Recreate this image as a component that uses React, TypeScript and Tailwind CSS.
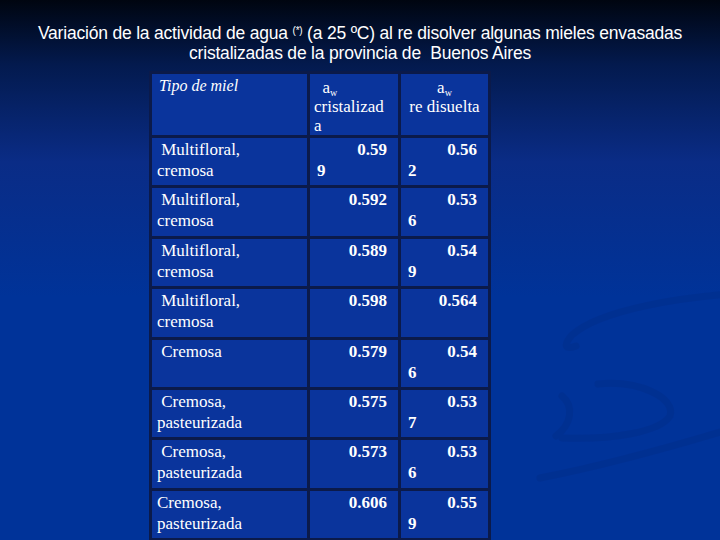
const rows = [
  { tipo: ["\u00a0Multifloral,", "cremosa"], cris: ["0.59", "9"], dis: ["0.56", "2"] },
  { tipo: ["\u00a0Multifloral,", "cremosa"], cris: ["0.592"], dis: ["0.53", "6"] },
  { tipo: ["\u00a0Multifloral,", "cremosa"], cris: ["0.589"], dis: ["0.54", "9"] },
  { tipo: ["\u00a0Multifloral,", "cremosa"], cris: ["0.598"], dis: ["0.564"] },
  { tipo: ["\u00a0Cremosa"], cris: ["0.579"], dis: ["0.54", "6"] },
  { tipo: ["\u00a0Cremosa,", "pasteurizada"], cris: ["0.575"], dis: ["0.53", "7"] },
  { tipo: ["\u00a0Cremosa,", "pasteurizada"], cris: ["0.573"], dis: ["0.53", "6"] },
  { tipo: ["Cremosa,", "pasteurizada"], cris: ["0.606"], dis: ["0.55", "9"] },
];

function NumCell({ lines }: { lines: string[] }) {
  return (
    <div className="bg-[#0a349c] pt-[1px] pl-[7px] pr-[11px] font-bold text-[17px] leading-[21px]">
      <div className="text-right">{lines[0]}</div>
      {lines[1] && <div className="text-left">{lines[1]}</div>}
    </div>
  );
}

export default function App() {
  return (
    <div className="relative w-[720px] h-[540px] overflow-hidden bg-[linear-gradient(180deg,#000510_0%,#031a4e_12%,#0a2c86_30%,#003399_55%,#003399_100%)] text-white">
      {/* faint background swooshes */}
      <svg className="absolute left-0 top-0" width="720" height="540" viewBox="0 0 720 540">
        <g fill="none" stroke="#00308f" strokeWidth="7" strokeLinecap="round" opacity="0.7">
          <path d="M760 292 C 680 296, 600 310, 572 335 C 562 346, 566 350, 576 346" />
          <path d="M598 384 C 640 380, 676 398, 670 416 C 660 432, 612 440, 562 438" />
          <path d="M720 432 C 660 450, 600 466, 540 478" />
          <path d="M562 396 C 574 406, 572 424, 556 436" />
        </g>
      </svg>

      <div className="relative flex flex-col items-center">
        <h1 className="pt-[23px] text-center font-['Liberation_Sans',Arial,sans-serif] text-[17.5px] leading-[20px] font-normal tracking-[-0.2px]">
          <div>
            Variación de la actividad de agua <sup className="text-[10px]">(*)</sup> (a 25 ºC) al re disolver algunas mieles envasadas
          </div>
          <div>cristalizadas de la provincia de&nbsp; Buenos Aires</div>
        </h1>

        <div className="mt-[8px] self-start ml-[149px] bg-[#0b1a4a] p-[3px] grid grid-cols-[155px_88px_87px] grid-rows-[61px_repeat(8,47.4px)] gap-[3px] font-['Liberation_Serif','Times_New_Roman',serif]">
          <div className="bg-[#0a349c] pl-[7px] pt-[3px] italic text-[16px] leading-[18px]">Tipo de miel</div>
          <div className="bg-[#0a349c] pl-[4px] pt-[4px] text-[17px] leading-[19px]">
            <div>
              &nbsp; a<sub className="text-[10px]">w</sub>
            </div>
            <div>cristalizad</div>
            <div>a</div>
          </div>
          <div className="bg-[#0a349c] pt-[4px] text-center text-[17px] leading-[19px]">
            <div>
              a<sub className="text-[10px]">w</sub>
            </div>
            <div>re disuelta</div>
          </div>

          {rows.map((r, i) => (
            <div key={i} className="contents">
              <div className="bg-[#0a349c] pl-[5px] pt-[1px] text-[17px] leading-[21px]">
                {r.tipo.map((t, j) => (
                  <div key={j}>{t}</div>
                ))}
              </div>
              <NumCell lines={r.cris} />
              <NumCell lines={r.dis} />
            </div>
          ))}
        </div>
      </div>
    </div>
  );
}
